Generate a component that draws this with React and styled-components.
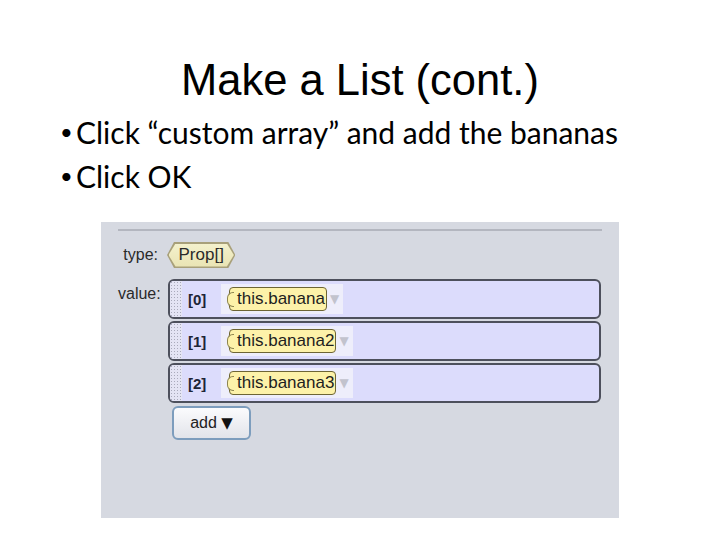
import React from 'react';
import { styled, createGlobalStyle } from 'styled-components';

const GlobalStyle = createGlobalStyle`
  html, body {
    margin: 0;
    padding: 0;
    background: #ffffff;
  }
`;

const items = ['this.banana', 'this.banana2', 'this.banana3'];

const App = () => {
  return (
    <>
      <GlobalStyle />
      <StSlide>
        <StTitle>Make a List (cont.)</StTitle>
        <StBullets>
          <StBullet>Click “custom array” and add the bananas</StBullet>
          <StBullet>Click OK</StBullet>
        </StBullets>

        <StPanel>
          <StRule />
          <StForm>
            <StLabel $top={4}>type:</StLabel>
            <div>
              <StTypeOuter>
                <StTypePill>Prop[]</StTypePill>
              </StTypeOuter>
            </div>

            <StLabel $top={6}>value:</StLabel>
            <StList>
              {items.map((item, i) => (
                <StRow key={item}>
                  <StGrip />
                  <StIndex>[{i}]</StIndex>
                  <StSlot>
                    <StValuePill>{item}</StValuePill>
                    <StArrow>▼</StArrow>
                  </StSlot>
                </StRow>
              ))}
              <StAddButton>
                add <span>▼</span>
              </StAddButton>
            </StList>
          </StForm>
        </StPanel>
      </StSlide>
    </>
  );
};

export default App;

const StSlide = styled.div`
  width: 720px;
  height: 540px;
  box-sizing: border-box;
  padding-top: 54px;
  display: flex;
  flex-direction: column;
  overflow: hidden;
`;

const StTitle = styled.h1`
  margin: 0;
  font-family: 'Liberation Sans', Arial, sans-serif;
  font-weight: 400;
  font-size: 43.5px;
  line-height: 52px;
  text-align: center;
  color: #000;
`;

const StBullets = styled.ul`
  margin: 0;
  padding: 4px 0 0 60px;
  list-style: none;
`;

const StBullet = styled.li`
  display: flex;
  align-items: center;
  font-family: Lato, 'Open Sans', sans-serif;
  font-size: 30px;
  line-height: 44px;
  color: #000;
  &::before {
    content: '•';
    width: 16px;
    font-size: 22px;
  }
`;

const StPanel = styled.div`
  margin: 24px 0 0 101px;
  width: 518px;
  height: 296px;
  box-sizing: border-box;
  padding: 7px 17px 0 17px;
  background: #d6d9e1;
`;

const StRule = styled.div`
  height: 2px;
  background: #b3b6bf;
`;

const StForm = styled.div`
  display: grid;
  grid-template-columns: 40px 1fr;
  column-gap: 10px;
  row-gap: 11px;
  padding-top: 11px;
`;

const StLabel = styled.div`
  padding-top: ${(p) => p.$top}px;
  font-family: 'Liberation Sans', Arial, sans-serif;
  font-size: 16px;
  color: #2a2a2a;
  text-align: right;
  white-space: nowrap;
`;

const hexagon = 'polygon(7px 0, calc(100% - 7px) 0, 100% 50%, calc(100% - 7px) 100%, 7px 100%, 0 50%)';

const StTypeOuter = styled.span`
  display: inline-flex;
  margin-left: -1px;
  padding: 1.5px;
  background: #a8a07a;
  clip-path: ${hexagon};
`;

const StTypePill = styled.span`
  display: inline-flex;
  align-items: center;
  height: 23px;
  padding: 0 10px;
  background: linear-gradient(#f4f1cc, #e9e4b4);
  font-family: 'Liberation Sans', Arial, sans-serif;
  font-size: 17px;
  color: #2a2a2a;
  clip-path: ${hexagon};
`;

const StList = styled.div`
  display: flex;
  flex-direction: column;
  gap: 2px;
  margin-right: 1px;
`;

const StRow = styled.div`
  display: flex;
  align-items: center;
  height: 40px;
  box-sizing: border-box;
  border: 2px solid #4d505c;
  border-radius: 6px;
  background: #dcdcfc;
  overflow: hidden;
`;

const StGrip = styled.div`
  align-self: stretch;
  width: 12px;
  background-color: #e4e4f4;
  background-image: radial-gradient(#a9aabb 0.8px, transparent 1px);
  background-size: 3px 3px;
`;

const StIndex = styled.span`
  margin-left: 6px;
  width: 33px;
  font-family: 'Liberation Sans', Arial, sans-serif;
  font-weight: 700;
  font-size: 15px;
  color: #1e2536;
`;

const StSlot = styled.div`
  display: flex;
  align-items: center;
  height: 30px;
  padding: 0 4px 0 8px;
  background: #eeeefb;
`;

const StValuePill = styled.span`
  position: relative;
  display: inline-flex;
  align-items: center;
  height: 24px;
  box-sizing: border-box;
  padding: 0 1px 0 7px;
  border: 1.5px solid #6d6535;
  border-radius: 4px;
  background: #fdf2a9;
  font-family: 'Liberation Sans', Arial, sans-serif;
  font-size: 17px;
  color: #1e1e1e;
  &::before {
    content: '';
    position: absolute;
    left: -3px;
    top: 4px;
    width: 6px;
    height: 13px;
    border: 1.5px solid #8d8550;
    border-right: none;
    border-radius: 6px 0 0 6px;
    background: #fdf2a9;
  }
`;

const StArrow = styled.span`
  margin-left: 3px;
  font-size: 12px;
  color: #c2c3cd;
  font-family: 'DejaVu Sans', sans-serif;
`;

const StAddButton = styled.button`
  align-self: flex-start;
  margin: 1px 0 0 4px;
  width: 79px;
  height: 34px;
  border: 2px solid #7d9dbd;
  border-radius: 6px;
  background: linear-gradient(#fbfbfd, #e2e4ea);
  font-family: 'Liberation Sans', Arial, sans-serif;
  font-size: 16px;
  color: #222;
  cursor: pointer;
  & span {
    font-family: 'DejaVu Sans', sans-serif;
    font-size: 15px;
    color: #111;
  }
`;
